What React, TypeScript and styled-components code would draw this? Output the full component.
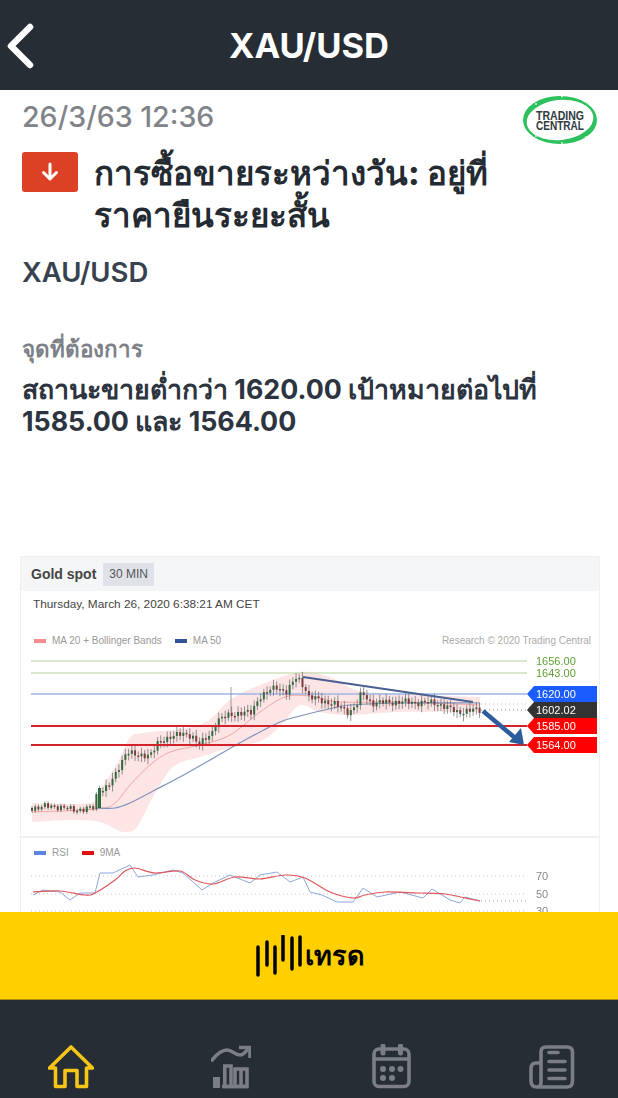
import styled, { createGlobalStyle } from 'styled-components'

const GlobalStyle = createGlobalStyle`
	html, body, #root {
		margin: 0;
		height: 100%;
	}
	body {
		background: #fff;
		font-family: 'Inter', 'Noto Sans', 'DejaVu Sans', sans-serif;
	}
`

const Screen = styled.div`
	width: 618px;
	height: 1098px;
	display: flex;
	flex-direction: column;
	overflow: hidden;
	background: #fff;
`
const TopBar = styled.header`
	height: 90px;
	flex: none;
	background: #262d34;
	display: flex;
	align-items: center;
	justify-content: center;
	position: relative;
`
const BackButton = styled.svg`
	position: absolute;
	left: 5px;
	top: 22px;
`
const TopTitle = styled.h1`
	margin: 0;
	color: #fff;
	font-size: 34.5px;
	font-weight: 700;
	letter-spacing: 0;
`
const Main = styled.main`
	flex: 1;
	min-height: 0;
	overflow: hidden;
	display: flex;
	flex-direction: column;
`
const Article = styled.section`
	height: 466px;
	flex: none;
	padding: 0 20px 0 23px;
	position: relative;
`
const DateText = styled.div`
	color: #808488;
	font-size: 28.6px;
	font-weight: 500;
	line-height: 32px;
	padding-top: 11px;
	margin-left: -1px;
`
const Logo = styled.svg`
	position: absolute;
	right: 20px;
	top: 5px;
`
const Headline = styled.div`
	display: flex;
	align-items: flex-start;
	gap: 16px;
	margin: 19px 0 0 -1px;
`
const DirectionBadge = styled.div`
	width: 56px;
	height: 40px;
	flex: none;
	border-radius: 3px;
	background: #dc4125;
	display: flex;
	align-items: center;
	justify-content: center;
`
const HeadlineText = styled.h2`
	margin: 0;
	width: 420px;
	color: #232a32;
	font-size: 33.1px;
	line-height: 42px;
	font-weight: 800;
`
const Symbol = styled.div`
	color: #38424f;
	font-size: 27.5px;
	font-weight: 600;
	line-height: 34px;
	margin: 19px 0 0 -1px;
`
const SectionLabel = styled.div`
	color: #7c8187;
	font-size: 22.4px;
	font-weight: 700;
	line-height: 28px;
	margin: 46px 0 0 -1px;
`
const Body = styled.p`
	margin: 10px 0 0 -1px;
	width: 540px;
	color: #2c3440;
	font-size: 26.8px;
	font-weight: 700;
	line-height: 32px;
`
const ChartCard = styled.div`
	margin: 0 18px 0 20px;
	border: 1px solid #eef0f2;
	border-bottom: 0;
	flex: none;
`
const ChartHead = styled.div`
	height: 34px;
	background: #f5f6f7;
	display: flex;
	align-items: center;
	gap: 7px;
	padding-left: 10px;
	font-family: 'Liberation Sans', Arial, sans-serif;
`
const ChartName = styled.span`
	color: #444;
	font-size: 14px;
	font-weight: 700;
`
const Interval = styled.span`
	background: #dfe2e8;
	color: #555;
	font-size: 12px;
	padding: 0 6px;
	line-height: 23px;
`
const DateLine = styled.div`
	color: #444;
	font-family: 'Liberation Sans', Arial, sans-serif;
	font-size: 11.8px;
	line-height: 14px;
	padding: 6px 0 0 12px;
`
const LegendRow = styled.div`
	display: flex;
	align-items: center;
	gap: 13px;
	height: 19px;
	margin-top: 20px;
	padding: 0 8px 0 13px;
	color: #999;
	font-family: 'Liberation Sans', Arial, sans-serif;
	font-size: 10px;
`
const RsiLegend = styled(LegendRow)`
	margin-top: 5px;
`
const LegendItem = styled.span`
	display: flex;
	align-items: center;
	gap: 6px;
`
const Swatch = styled.i<{ $color: string }>`
	width: 12px;
	height: 4px;
	background: ${(p) => p.$color};
`
const Credit = styled.span`
	margin-left: auto;
	color: #aaa;
`
const Plot = styled.svg`
	display: block;
	filter: blur(0.35px);
	font-family: 'Liberation Sans', Arial, sans-serif;
`
const PaneDivider = styled.div`
	height: 2px;
	background: #eef0f2;
`
const TradeButton = styled.button`
	height: 88px;
	flex: none;
	border: 0;
	border-bottom: 1px solid #a98c10;
	background: #ffcf00;
	display: flex;
	align-items: center;
	justify-content: center;
	gap: 2px;
	padding: 0 0 0 2px;
	color: #000;
	font-family: inherit;
	font-size: 27px;
	font-weight: 700;
`
const TabBar = styled.nav`
	height: 98px;
	flex: none;
	background: #262d34;
	display: flex;
	align-items: flex-start;
	gap: 117px;
	padding: 45px 0 0 48px;
	box-sizing: border-box;
`
const TabIcon = styled.svg<{ $active?: boolean }>`
	flex: none;
	fill: none;
	stroke: ${(p) => (p.$active ? '#f5c518' : '#7b7e84')};
	stroke-width: 3.6;
`
const CalendarShift = styled(TabIcon)`
	margin-top: -1px;
`

type Point = [number, number]

// price line read off the picture, in page px
const pricePath: Point[] = [
	[32, 808], [60, 806], [75, 810], [97, 808], [101, 790], [110, 787], [117, 779], [130, 750], [140, 757],
	[155, 753], [160, 745], [175, 735], [195, 735], [203, 745], [215, 733], [220, 720], [240, 713], [255, 713],
	[262, 697], [280, 687], [290, 692], [300, 677], [308, 687], [312, 697], [322, 700], [335, 703], [352, 712],
	[360, 705], [365, 693], [375, 703], [400, 702], [440, 703], [460, 712], [480, 710],
]
const upperBand: Point[] = [
	[32, 803], [90, 803], [100, 790], [118, 762], [130, 738], [143, 733], [200, 725], [230, 700], [260, 685],
	[300, 672], [330, 677], [355, 690], [380, 693], [420, 695], [480, 697],
]
const lowerBand: Point[] = [
	[480, 712], [400, 712], [350, 715], [320, 712], [300, 705], [283, 723], [263, 740], [233, 747], [200, 757],
	[173, 767], [153, 797], [137, 827], [123, 832], [100, 822], [70, 820], [32, 822],
]
const ma20: Point[] = [
	[32, 812], [97, 809], [115, 803], [130, 785], [150, 765], [170, 752], [200, 745], [230, 735], [260, 712],
	[285, 697], [310, 696], [340, 702], [400, 702], [480, 705],
]
const ma50: Point[] = [
	[97, 808], [115, 808], [130, 803], [155, 790], [180, 777], [210, 760], [245, 740], [280, 722], [300, 716],
	[333, 708], [350, 705], [400, 703], [480, 703],
]
const rsiLine: Point[] = [
	[33, 895], [43, 890], [60, 892], [70, 900], [80, 893], [95, 893], [100, 873], [113, 873], [130, 865], [138, 877],
	[153, 875], [173, 870], [183, 873], [202, 890], [213, 883], [230, 875], [250, 883], [260, 875], [277, 872],
	[290, 882], [303, 877], [310, 892], [322, 895], [337, 902], [353, 902], [363, 888], [377, 897], [400, 892],
	[423, 898], [432, 889], [450, 900], [460, 903], [465, 897], [480, 901],
]
const rsiAverage: Point[] = [
	[33, 892], [60, 891], [85, 895], [95, 893], [115, 880], [125, 871], [135, 868], [155, 873], [180, 871],
	[195, 880], [213, 884], [235, 877], [260, 879], [285, 875], [305, 878], [330, 892], [353, 898], [365, 895],
	[385, 892], [420, 893], [445, 894], [465, 898], [480, 901],
]

const levels = [
	{ y: 661, line: '#b5d39a', text: '1656.00' },
	{ y: 673, line: '#b5d39a', text: '1643.00' },
]
const tags = [
	{ y: 694, fill: '#1a5cff', text: '1620.00' },
	{ y: 710, fill: '#333333', text: '1602.02' },
	{ y: 726, fill: '#ff0000', text: '1585.00' },
	{ y: 745, fill: '#ff0000', text: '1564.00' },
]

const PLOT_TOP = 650
const RSI_TOP = 862
const CARD_LEFT = 21

const toPoints = (points: Point[], top: number) =>
	points.map(([x, y]) => `${x - CARD_LEFT},${y - top}`).join(' ')

// Catmull-Rom through the points, so the averages and bands don't look polygonal
const smoothSegments = (points: Point[], top: number) => {
	const p = points.map(([x, y]): Point => [x - CARD_LEFT, y - top])
	let d = ''
	for (let i = 0; i < p.length - 1; i++) {
		const a = p[Math.max(i - 1, 0)]
		const b = p[i]
		const c = p[i + 1]
		const e = p[Math.min(i + 2, p.length - 1)]
		const c1x = b[0] + (c[0] - a[0]) / 6
		const c1y = b[1] + (c[1] - a[1]) / 6
		const c2x = c[0] - (e[0] - b[0]) / 6
		const c2y = c[1] - (e[1] - b[1]) / 6
		d += ` C${c1x.toFixed(1)} ${c1y.toFixed(1)} ${c2x.toFixed(1)} ${c2y.toFixed(1)} ${c[0]} ${c[1]}`
	}
	return d
}
const smoothPath = (points: Point[], top: number) =>
	`M${points[0][0] - CARD_LEFT} ${points[0][1] - top}${smoothSegments(points, top)}`

const bandPath = () =>
	`${smoothPath(upperBand, PLOT_TOP)} L${lowerBand[0][0] - CARD_LEFT} ${lowerBand[0][1] - PLOT_TOP}${smoothSegments(lowerBand, PLOT_TOP)} Z`

const priceAt = (x: number) => {
	for (let i = 1; i < pricePath.length; i++) {
		const [x0, y0] = pricePath[i - 1]
		const [x1, y1] = pricePath[i]
		if (x <= x1) return y0 + ((y1 - y0) * (x - x0)) / (x1 - x0)
	}
	return 710
}

const candles = Array.from({ length: 140 }, (_, i) => {
	const x = 32 + i * 3.22
	const noise = Math.sin(i * 2.3) * 2.5 + Math.sin(i * 0.9) * 1.5
	const y = priceAt(x) + noise
	const close = priceAt(x + 3.2) + Math.sin((i + 1) * 2.3) * 2.5 + Math.sin((i + 1) * 0.9) * 1.5
	const quiet = x < 97
	return {
		x: x - CARD_LEFT,
		top: Math.min(y, close) - PLOT_TOP,
		height: Math.max(Math.abs(close - y), 1.5),
		wick: quiet ? 2 : 3 + Math.abs(Math.sin(i * 1.7)) * 3,
		up: close < y,
	}
})

function CandleStick({ x, top, height, wick, up }: (typeof candles)[number]) {
	const color = up ? '#2f6b3c' : '#7d3b40'
	return (
		<g>
			<line x1={x} x2={x} y1={top - wick} y2={top + height + wick} stroke="#666" strokeWidth={0.7} />
			<rect x={x - 1} y={top} width={2} height={height} fill={color} />
		</g>
	)
}

function PricePlot() {
	return (
		<Plot width={578} height={186} viewBox="0 0 578 186">
			<path d={bandPath()} fill="#fde5e5" />
			<path d={smoothPath(ma20, PLOT_TOP)} fill="none" stroke="#f5a5a5" strokeWidth={1} />
			<path d={smoothPath(ma50, PLOT_TOP)} fill="none" stroke="#7f93bb" strokeWidth={1.2} />
			{levels.map((l) => (
				<g key={l.text}>
					<line x1={10} x2={506} y1={l.y - PLOT_TOP} y2={l.y - PLOT_TOP} stroke={l.line} />
					<text x={515} y={l.y - PLOT_TOP + 4} fontSize={11} fill="#5f9e32">
						{l.text}
					</text>
				</g>
			))}
			<line x1={10} x2={506} y1={44} y2={44} stroke="#9db5e6" strokeWidth={1.5} />
			<line x1={210} x2={210} y1={37} y2={62} stroke="#888" strokeWidth={0.8} />
			{candles.map((c) => (
				<CandleStick key={c.x} {...c} />
			))}
			<rect x={77} y={138} width={3} height={20} fill="#2f6b3c" />
			<line x1={10} x2={506} y1={76} y2={76} stroke="#d3232a" strokeWidth={2} />
			<line x1={10} x2={506} y1={95} y2={95} stroke="#d3232a" strokeWidth={2} />
			<line x1={460} x2={506} y1={54} y2={54} stroke="#bbb" strokeDasharray="1 3" />
			<line x1={460} x2={506} y1={60} y2={60} stroke="#888" strokeDasharray="1 3" />
			<line x1={282} x2={452} y1={27} y2={52} stroke="#4a5f92" strokeWidth={2.2} />
			<line x1={462} x2={493} y1={61} y2={87} stroke="#2b5c9e" strokeWidth={4.5} />
			<polygon points="503,95 488,92 500,78" fill="#2b5c9e" />
			{tags.map((t) => {
				const mid = t.y - PLOT_TOP
				return (
					<g key={t.text}>
						<polygon
							points={`506,${mid} 513,${mid - 8} 576,${mid - 8} 576,${mid + 8} 513,${mid + 8}`}
							fill={t.fill}
						/>
						<text x={515} y={mid + 4} fontSize={11} fill="#fff">
							{t.text}
						</text>
					</g>
				)
			})}
		</Plot>
	)
}

function RsiPlot() {
	const rows = [
		{ y: 876, label: '70' },
		{ y: 894, label: '50' },
		{ y: 911, label: '30' },
	]
	return (
		<Plot width={578} height={60} viewBox="0 0 578 60">
			{rows.map((r) => (
				<g key={r.label}>
					<line
						x1={10}
						x2={506}
						y1={r.y - RSI_TOP}
						y2={r.y - RSI_TOP}
						stroke="#c4c4c4"
						strokeDasharray="1 3"
					/>
					<text x={515} y={r.y - RSI_TOP + 4} fontSize={11} fill="#888">
						{r.label}
					</text>
				</g>
			))}
			<line x1={460} x2={506} y1={39} y2={39} stroke="#999" strokeDasharray="1 3" />
			<polyline points={toPoints(rsiLine, RSI_TOP)} fill="none" stroke="#8ea6dd" strokeWidth={1} />
			<path d={smoothPath(rsiAverage, RSI_TOP)} fill="none" stroke="#e0565a" strokeWidth={1.2} />
		</Plot>
	)
}

function TradingCentralLogo() {
	const nodes = [
		[14, 9],
		[40, 1.5],
		[66, 8],
		[14, 41],
		[40, 48],
		[64, 42],
	]
	return (
		<Logo width={76} height={50} viewBox="0 0 76 50">
			<ellipse cx={38} cy={25} rx={37} ry={24} fill="#2ec05c" />
			<ellipse cx={38} cy={25} rx={33.5} ry={20} fill="#fff" transform="rotate(-6 38 25)" />
			{nodes.map(([cx, cy]) => (
				<circle key={cx + cy} cx={cx} cy={cy} r={1} fill="#d8f5e0" />
			))}
			<text
				textAnchor="middle"
				fontFamily="'Liberation Sans', sans-serif"
				fontSize={12}
				fontWeight={700}
				fill="#2f3a40"
			>
				<tspan x={38} y={25} textLength={48} lengthAdjust="spacingAndGlyphs">
					TRADING
				</tspan>
				<tspan x={38} y={35} textLength={48} lengthAdjust="spacingAndGlyphs">
					CENTRAL
				</tspan>
			</text>
		</Logo>
	)
}

function TradeBars() {
	const bars = [
		[2, 12, 40],
		[11, 7, 30],
		[19, 12, 38],
		[27, 0, 25],
		[36, 3, 34],
		[44, 2, 30],
	]
	return (
		<svg width={47} height={42} viewBox="0 0 47 42">
			{bars.map(([x, y1, y2]) => (
				<line key={x} x1={x} x2={x} y1={y1} y2={y2} stroke="#000" strokeWidth={3.5} strokeLinecap="round" />
			))}
		</svg>
	)
}

function HomeIcon() {
	return (
		<TabIcon $active width={46} height={44} viewBox="0 0 46 44">
			<path d="M17 41.5 H7.5 V23 H1.5 L23 2 L44.5 23 H38.5 V41.5 H29 V25.5 H17 Z" strokeLinejoin="round" />
		</TabIcon>
	)
}

function MarketIcon() {
	return (
		<TabIcon width={40} height={44} viewBox="0 0 40 44">
			<path d="M1 15 C6 9 11 5 16 5 C21 5 24 10 29 10 C33 10 35 6 38 3" strokeLinecap="round" />
			<path d="M28 2.5 H39 V13" strokeLinejoin="round" />
			<path d="M2 32 H9 V43 H2 Z" fill="#7b7e84" strokeWidth={0} />
			<path d="M13.8 21 H20 V41.5 H13.8 Z M24 24 H36 V41.5 H24 Z M30 24 V41.5" />
			<path d="M11 41.5 H37" />
		</TabIcon>
	)
}

function CalendarIcon() {
	const dots = [
		[15, 25],
		[24, 25],
		[32.5, 25],
		[15, 34],
		[24, 34],
	]
	return (
		<CalendarShift width={44} height={46} viewBox="0 0 44 46">
			<rect x={6} y={5} width={35} height={37.5} rx={5} />
			<path d="M6 15 H41" />
			<path d="M15 2 V9 M32.5 2 V9" strokeWidth={5} strokeLinecap="round" />
			{dots.map(([cx, cy]) => (
				<circle key={`${cx}-${cy}`} cx={cx} cy={cy} r={3} fill="#7b7e84" stroke="none" />
			))}
		</CalendarShift>
	)
}

function NewsIcon() {
	return (
		<TabIcon width={46} height={44} viewBox="0 0 46 44">
			<path d="M12 18 H7 Q2 18 2 24 V36 Q2 42 8 42 H38 Q43.5 42 43.5 36 V7 Q43.5 2 38 2 H17 Q12 2 12 7 V37 Q12 42 8 42" />
			<path d="M20 7.5 H29 M20 16.5 H36 M20 25 H36 M20 33.5 H36" strokeLinecap="round" />
		</TabIcon>
	)
}

export default function App() {
	return (
		<Screen>
			<GlobalStyle />
			<TopBar>
				<BackButton width={30} height={48} viewBox="0 0 30 48" fill="none">
					<path d="M25 5 L6 24 L25 43" stroke="#fff" strokeWidth={6.5} strokeLinecap="round" strokeLinejoin="round" />
				</BackButton>
				<TopTitle>XAU/USD</TopTitle>
			</TopBar>
			<Main>
				<Article>
					<DateText>26/3/63 12:36</DateText>
					<TradingCentralLogo />
					<Headline>
						<DirectionBadge>
							<svg width={20} height={22} viewBox="0 0 20 22" fill="none">
								<path
									d="M10 3 V18 M3.5 11.5 L10 18 L16.5 11.5"
									stroke="#fff"
									strokeWidth={3}
									strokeLinecap="round"
									strokeLinejoin="round"
								/>
							</svg>
						</DirectionBadge>
						<HeadlineText>การซื้อขายระหว่างวัน: อยู่ที่ราคายืนระยะสั้น</HeadlineText>
					</Headline>
					<Symbol>XAU/USD</Symbol>
					<SectionLabel>จุดที่ต้องการ</SectionLabel>
					<Body>สถานะขายต่ำกว่า 1620.00 เป้าหมายต่อไปที่ 1585.00 และ 1564.00</Body>
				</Article>
				<ChartCard>
					<ChartHead>
						<ChartName>Gold spot</ChartName>
						<Interval>30 MIN</Interval>
					</ChartHead>
					<DateLine>Thursday, March 26, 2020 6:38:21 AM CET</DateLine>
					<LegendRow>
						<LegendItem>
							<Swatch $color="#f58a8f" />
							MA 20 + Bollinger Bands
						</LegendItem>
						<LegendItem>
							<Swatch $color="#2f5597" />
							MA 50
						</LegendItem>
						<Credit>Research © 2020 Trading Central</Credit>
					</LegendRow>
					<PricePlot />
					<PaneDivider />
					<RsiLegend>
						<LegendItem>
							<Swatch $color="#5c85e0" />
							RSI
						</LegendItem>
						<LegendItem>
							<Swatch $color="#e01010" />
							9MA
						</LegendItem>
					</RsiLegend>
					<RsiPlot />
				</ChartCard>
			</Main>
			<TradeButton>
				<TradeBars />
				เทรด
			</TradeButton>
			<TabBar>
				<HomeIcon />
				<MarketIcon />
				<CalendarIcon />
				<NewsIcon />
			</TabBar>
		</Screen>
	)
}
